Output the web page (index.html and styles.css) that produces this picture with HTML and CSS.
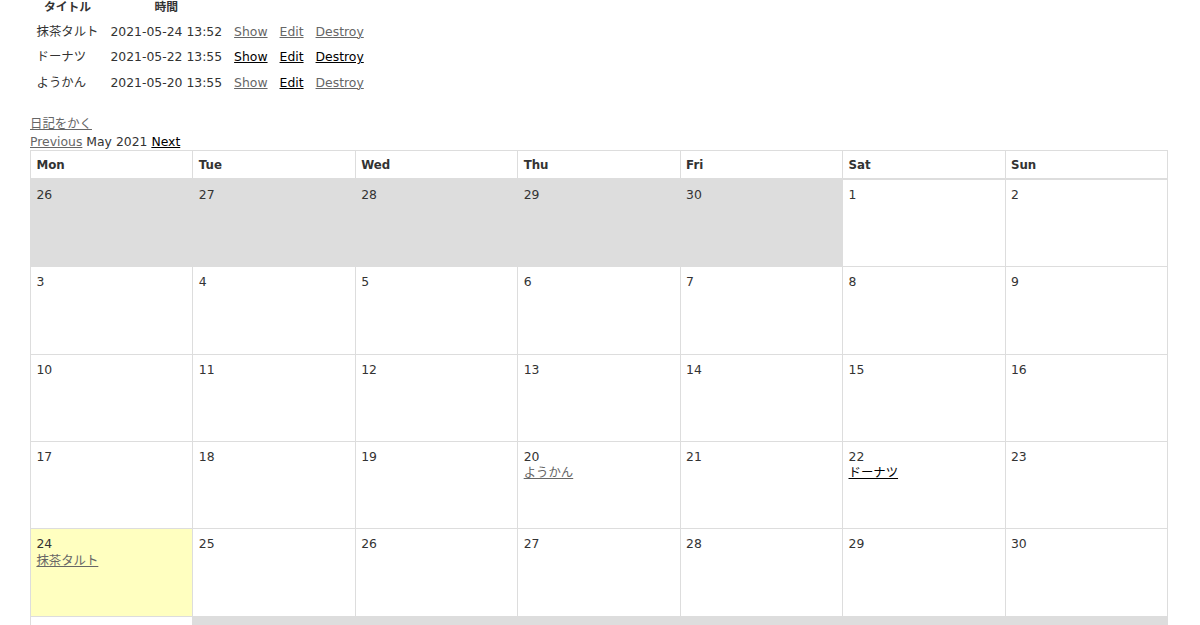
FILE: index.html
```html
<!DOCTYPE html>
<html lang="ja">
<head>
<meta charset="utf-8">
<title>日記</title>
<link rel="stylesheet" href="styles.css">
</head>
<body>
<table class="blogs">
  <thead>
    <tr><th>タイトル</th><th>時間</th><th colspan="3"></th></tr>
  </thead>
  <tbody>
    <tr><td>抹茶タルト</td><td>2021-05-24 13:52</td><td><a class="visited" href="#">Show</a></td><td><a class="visited" href="#">Edit</a></td><td><a class="visited" href="#">Destroy</a></td></tr>
    <tr><td>ドーナツ</td><td>2021-05-22 13:55</td><td><a href="#">Show</a></td><td><a href="#">Edit</a></td><td><a href="#">Destroy</a></td></tr>
    <tr><td>ようかん</td><td>2021-05-20 13:55</td><td><a class="visited" href="#">Show</a></td><td><a href="#">Edit</a></td><td><a class="visited" href="#">Destroy</a></td></tr>
  </tbody>
</table>
<div class="spacer"></div>
<a class="visited" href="#">日記をかく</a>
<div class="simple-calendar">
  <div class="calendar-heading"><a class="visited" href="#">Previous</a> <span class="calendar-title">May 2021</span> <a href="#">Next</a></div>
  <table class="cal">
    <thead>
      <tr><th>Mon</th><th>Tue</th><th>Wed</th><th>Thu</th><th>Fri</th><th>Sat</th><th>Sun</th></tr>
    </thead>
    <tbody>
      <tr>
        <td class="day prev-month">26</td><td class="day prev-month">27</td><td class="day prev-month">28</td><td class="day prev-month">29</td><td class="day prev-month">30</td><td class="day">1</td><td class="day">2</td>
      </tr>
      <tr>
        <td class="day">3</td><td class="day">4</td><td class="day">5</td><td class="day">6</td><td class="day">7</td><td class="day">8</td><td class="day">9</td>
      </tr>
      <tr>
        <td class="day">10</td><td class="day">11</td><td class="day">12</td><td class="day">13</td><td class="day">14</td><td class="day">15</td><td class="day">16</td>
      </tr>
      <tr>
        <td class="day">17</td><td class="day">18</td><td class="day">19</td><td class="day">20<div><a class="visited" href="#">ようかん</a></div></td><td class="day">21</td><td class="day">22<div><a href="#">ドーナツ</a></div></td><td class="day">23</td>
      </tr>
      <tr>
        <td class="day today">24<div><a class="visited" href="#">抹茶タルト</a></div></td><td class="day">25</td><td class="day">26</td><td class="day">27</td><td class="day">28</td><td class="day">29</td><td class="day">30</td>
      </tr>
      <tr>
        <td class="day">31</td><td class="day next-month">1</td><td class="day next-month">2</td><td class="day next-month">3</td><td class="day next-month">4</td><td class="day next-month">5</td><td class="day next-month">6</td>
      </tr>
    </tbody>
  </table>
</div>
</body>
</html>
```
FILE: styles.css
```css
html, body {
  background: #fff;
}
body {
  margin: 0 32px 0 30px;
  color: #333;
  font-family: "DejaVu Sans", Verdana, "Noto Sans CJK JP", sans-serif;
  font-size: 12.4px;
  line-height: 16.2px;
}
a {
  color: #000;
}
a.visited {
  color: #666;
}
.blogs {
  border-spacing: 1.8px;
  margin-top: -2px;
}
.blogs th {
  padding: 0 1px 7.5px;
  font-weight: bold;
  font-size: 11.8px;
}
.blogs td {
  padding: 0 5.5px 8.3px;
}
.spacer {
  height: 16.2px;
}
.calendar-heading {
  margin-top: 1px;
  line-height: 16.2px;
}
.cal {
  width: 100%;
  border: 1px solid #ddd;
  border-collapse: collapse;
  table-layout: fixed;
}
.cal th {
  padding: 6.4px 5.4px 4.4px;
  text-align: left;
  border-left: 1px solid #ddd;
  border-right: 1px solid #ddd;
  border-bottom: 2px solid #ddd;
  font-weight: bold;
  font-size: 11.8px;
}
.cal td {
  padding: 7px 5.4px 5.4px;
  vertical-align: top;
  border: 1px solid #ddd;
  height: 74px;
}
.cal .prev-month,
.cal .next-month {
  background: #ddd;
}
.cal .today {
  background: #ffffc0;
}
```
